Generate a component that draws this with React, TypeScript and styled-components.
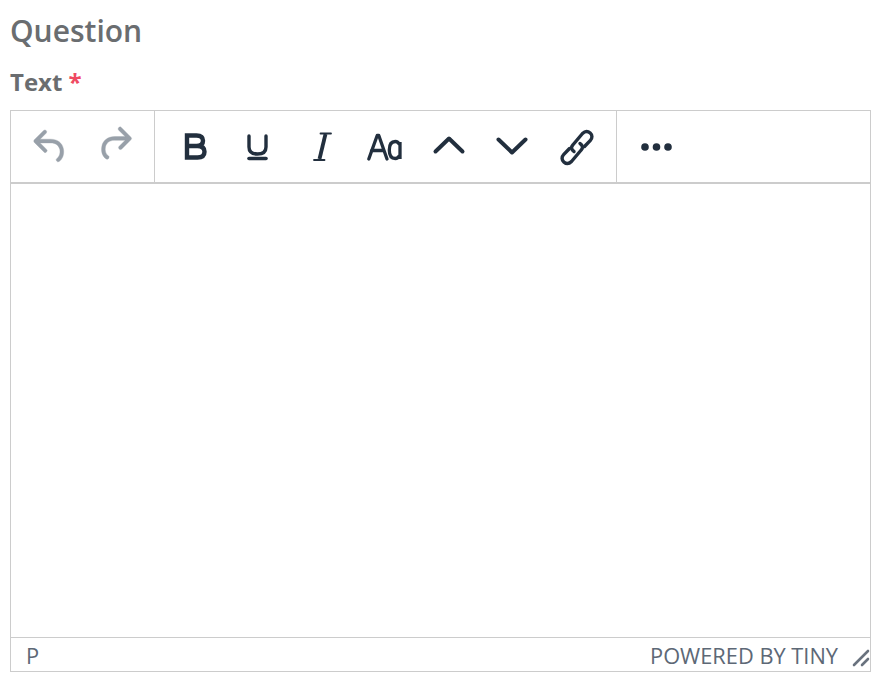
import { createGlobalStyle } from "styled-components";
import styled from "styled-components";

const GlobalStyle = createGlobalStyle`
  html, body {
    margin: 0;
    padding: 0;
    background: #fff;
  }
  body {
    font-family: "Open Sans", "Liberation Sans", sans-serif;
  }
`;

const Page = styled.div`
  width: 883px;
  height: 684px;
  box-sizing: border-box;
  padding: 12px 12px 12px 10px;
  display: flex;
  flex-direction: column;
`;

const Heading = styled.h2`
  margin: 0;
  font-size: 30px;
  line-height: 38px;
  font-weight: 600;
  color: #6a6d70;
`;

const Label = styled.label`
  margin-top: 15px;
  font-size: 24px;
  line-height: 33px;
  font-weight: 700;
  color: #6a6d70;
`;

const Required = styled.span`
  color: #ef4a62;
`;

const Editor = styled.div`
  margin-top: 12px;
  width: 861px;
  height: 562px;
  box-sizing: border-box;
  border: 1px solid #cccccc;
  display: flex;
  flex-direction: column;
`;

const Toolbar = styled.div`
  display: flex;
  height: 73px;
  flex: none;
  box-sizing: border-box;
  border-bottom: 2px solid #cccccc;
`;

const ToolGroup = styled.div<{ $pad: number; $last?: boolean }>`
  display: flex;
  align-items: center;
  padding: 0 ${(p) => p.$pad}px;
  border-right: ${(p) => (p.$last ? "0" : "1px solid #cccccc")};
`;

const ToolButton = styled.button<{ $w: number; $muted?: boolean }>`
  width: ${(p) => p.$w}px;
  height: 46px;
  padding: 0;
  border: 0;
  background: none;
  display: flex;
  align-items: center;
  justify-content: center;
  color: ${(p) => (p.$muted ? "#98a0a9" : "#222f3e")};
`;

const Content = styled.div`
  flex: 1;
`;

const StatusBar = styled.div`
  height: 34px;
  flex: none;
  box-sizing: border-box;
  border-top: 1px solid #cccccc;
  padding: 1px 0 0 15px;
  display: flex;
  align-items: center;
  justify-content: space-between;
  font-size: 21.8px;
  color: #5d6876;
`;

const Brand = styled.div`
  display: flex;
  align-items: center;
  gap: 14px;
`;

const ResizeHandle = styled.svg`
  margin-top: 6px;
`;

const Icon = ({ children }: { children: React.ReactNode }) => (
  <svg width="46" height="46" viewBox="0 0 46 46" fill="none" stroke="currentColor" strokeWidth="4" strokeLinecap="round" strokeLinejoin="round">
    {children}
  </svg>
);

export default function App() {
  return (
    <>
      <GlobalStyle />
      <Page>
        <Heading>Question</Heading>
        <Label>
          Text <Required>*</Required>
        </Label>
        <Editor>
          <Toolbar>
            <ToolGroup $pad={4.5}>
              <ToolButton $w={67} $muted title="Undo">
                <svg width="45" height="45" viewBox="0 0 24 24" fill="currentColor" stroke="currentColor" strokeWidth=".2">
                  <path d="M6.4 8H12c3.7 0 6.2 2 6.8 5.1.6 2.7-.4 5.6-2.3 6.8a1 1 0 0 1-1-1.800c1.100-.6 1.800-2.700 1.400-4.600-.5-2.100-2.100-3.500-4.900-3.500H6.400l3.300 3.300a1 1 0 1 1-1.400 1.400l-5-5a1 1 0 0 1 0-1.400l5-5a1 1 0 0 1 1.400 1.400L6.400 8Z" transform="translate(.6 .1)" />
                </svg>
              </ToolButton>
              <ToolButton $w={67} $muted title="Redo">
                <svg width="45" height="45" viewBox="0 0 24 24" fill="currentColor" stroke="currentColor" strokeWidth=".2">
                  <path d="M17.600 10H12c-2.800 0-4.400 1.400-4.900 3.500-.4 2 .3 4 1.400 4.600a1 1 0 1 1-1 1.800c-2-1.200-2.900-4.100-2.300-6.800.6-3 3.200-5.100 6.800-5.100h5.600l-3.300-3.300a1 1 0 1 1 1.400-1.400l5 5a1 1 0 0 1 0 1.400l-5 5a1 1 0 0 1-1.400-1.400l3.300-3.300Z" transform="translate(-1 -1.300)" />
                </svg>
              </ToolButton>
            </ToolGroup>
            <ToolGroup $pad={8}>
              <ToolButton $w={63.5} title="Bold">
                <Icon>
                  <path d="M15 11.500h9.500c4 0 6.500 1.800 6.500 5.300s-2.500 5.200-6.500 5.200H15M15 11.500v22M15 22h10.500c4.300 0 7 1.900 7 5.800s-2.700 5.700-7 5.700H15" strokeWidth="4.400" strokeLinecap="square" strokeLinejoin="miter" />
                </Icon>
              </ToolButton>
              <ToolButton $w={63.5} title="Underline">
                <Icon>
                  <path d="M14 12v11c0 4.500 3 7 8.500 7s8.500-2.500 8.500-7V12" strokeWidth="3.400" />
                  <path d="M14 34.500h17" strokeWidth="3.600" />
                </Icon>
              </ToolButton>
              <ToolButton $w={63.5} title="Italic">
                <Icon>
                  <path d="M26.500 10 20.500 35" strokeWidth="3.800" strokeLinecap="butt" />
                  <path d="M21.500 9.500h10.500M15 36h10.500" strokeWidth="1.800" />
                </Icon>
              </ToolButton>
              <ToolButton $w={63.5} title="Font size">
                <Icon>
                  <path d="M6.800 35 15.200 11.500h1.600L25 35M9.500 26.500h12.500" strokeWidth="3.300" />
                  <path d="M37.500 20.500c-1-2-2.500-3-4.200-3-4 0-6 3.300-6 8.500s2 8.500 6 8.500c1.700 0 3.200-1 4.200-3M38 18v17" strokeWidth="3.300" strokeLinecap="butt" />
                </Icon>
              </ToolButton>
              <ToolButton $w={63.5} title="Increase">
                <Icon>
                  <path d="M9.500 27.500 23 14.500 36.500 27.500" strokeWidth="4" />
                </Icon>
              </ToolButton>
              <ToolButton $w={63.5} title="Decrease">
                <Icon>
                  <path d="M9.500 15.500 23 28.500 36.500 15.500" strokeWidth="4" />
                </Icon>
              </ToolButton>
              <ToolButton $w={63.5} title="Link">
                <svg width="46" height="46" viewBox="0 0 46 46" fill="none" stroke="currentColor" strokeWidth="3.400" strokeLinecap="round" strokeLinejoin="round">
                  <path d="M20.500 27c-2.800-1.800-3.200-4.500-1.200-6.500L29 9c2.500-2.500 5.500-2.400 7.700-.4s2.300 5 .2 7.200L31 22" transform="translate(.5 .5)" />
                  <path d="M26.500 19c2.800 1.800 3.200 4.500 1.200 6.500L18 37c-2.500 2.500-5.500 2.400-7.700.4s-2.300-5-.2-7.200L16 24" transform="translate(.5 .5)" />
                </svg>
              </ToolButton>
            </ToolGroup>
            <ToolGroup $pad={17} $last>
              <ToolButton $w={46} title="More">
                <svg width="46" height="46" viewBox="0 0 46 46" fill="currentColor">
                  <circle cx="11" cy="23" r="3.800" />
                  <circle cx="22.500" cy="23" r="3.800" />
                  <circle cx="34" cy="23" r="3.800" />
                </svg>
              </ToolButton>
            </ToolGroup>
          </Toolbar>
          <Content />
          <StatusBar>
            <span>P</span>
            <Brand>
              <span>POWERED BY TINY</span>
              <ResizeHandle width="18" height="18" viewBox="0 0 18 18" fill="none" stroke="#69727e" strokeWidth="2.600" strokeLinecap="round">
                <path d="M2 16 16 2M10 16 16 10" />
              </ResizeHandle>
            </Brand>
          </StatusBar>
        </Editor>
      </Page>
    </>
  );
}
